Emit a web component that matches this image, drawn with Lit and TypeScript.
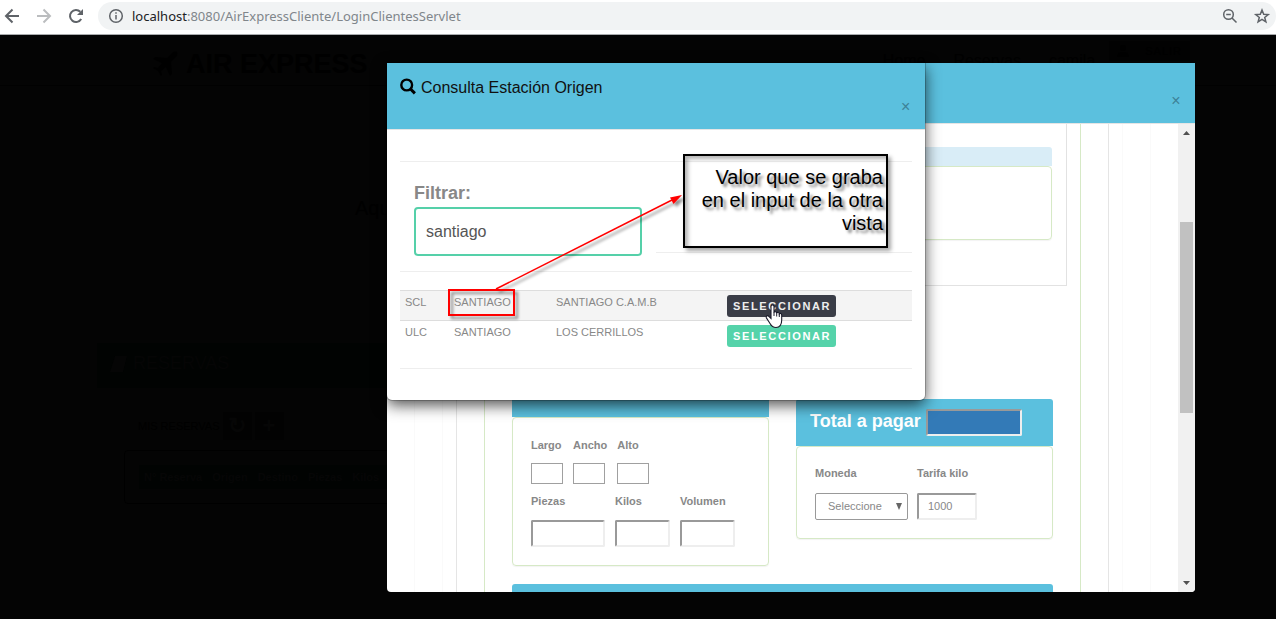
import { LitElement, html, css, svg } from "lit";
import { customElement, property, state } from "lit/decorators.js";

interface Station {
  code: string;
  city: string;
  name: string;
}

const STATIONS: Station[] = [
  { code: "SCL", city: "SANTIAGO", name: "SANTIAGO C.A.M.B" },
  { code: "ULC", city: "SANTIAGO", name: "LOS CERRILLOS" },
];

const base = css`
  * {
    box-sizing: border-box;
  }
  button,
  input,
  select {
    font-family: inherit;
    margin: 0;
  }
`;

@customElement("browser-bar")
class BrowserBar extends LitElement {
  static styles = [
    base,
    css`
      :host {
        display: flex;
        align-items: center;
        height: 35px;
        padding: 0 0 3px 2px;
        background: #fff;
        border-bottom: 1px solid #a9abad;
        font-family: "Noto Sans", "Open Sans", sans-serif;
      }
      .nav {
        display: flex;
        gap: 12px;
        margin-right: 12px;
      }
      button {
        display: flex;
        padding: 0;
        border: 0;
        background: none;
        color: #5f6368;
      }
      .nav button:disabled {
        color: #bbbdbf;
      }
      .address {
        flex: 1;
        display: flex;
        align-items: center;
        height: 28px;
        padding: 0 4px 0 8px;
        border-radius: 14px;
        background: #f1f3f4;
      }
      .url {
        flex: 1;
        margin-left: 6px;
        font-size: 13px;
        line-height: 20px;
        color: #80868b;
      }
      .url b {
        font-weight: 400;
        color: #202124;
      }
      .tools {
        display: flex;
        gap: 12px;
      }
    `,
  ];

  render() {
    return html`
      <div class="nav">
        <button aria-label="Atrás">
          <svg width="20" height="20" viewBox="0 0 20 20" fill="none" stroke="currentColor" stroke-width="2">
            <path d="M17 10H4M10.5 3.5L4 10l6.500 6.500" />
          </svg>
        </button>
        <button aria-label="Adelante" disabled>
          <svg width="20" height="20" viewBox="0 0 20 20" fill="none" stroke="currentColor" stroke-width="2">
            <path d="M3 10h13M9.500 3.500L16 10l-6.500 6.500" />
          </svg>
        </button>
        <button aria-label="Recargar">
          <svg width="20" height="20" viewBox="0 0 20 20">
            <path d="M15.200 13A6 6 0 1 1 14.300 5.800" fill="none" stroke="currentColor" stroke-width="2" />
            <path d="M17 3v6h-6z" fill="currentColor" />
          </svg>
        </button>
      </div>
      <div class="address">
        <svg width="20" height="20" viewBox="0 0 20 20" fill="none" stroke="#5f6368" stroke-width="1.500">
          <circle cx="10" cy="10" r="6.300" />
          <path d="M10 9v4.500M10 6.200v1.600" />
        </svg>
        <span class="url"><b>localhost</b>:8080/AirExpressCliente/LoginClientesServlet</span>
        <div class="tools">
          <button aria-label="Zoom">
            <svg width="20" height="20" viewBox="0 0 20 20" fill="none" stroke="currentColor" stroke-width="1.500">
              <circle cx="8.500" cy="8.500" r="4.800" />
              <path d="M12 12l4.500 4.500M6.200 8.500h4.600" />
            </svg>
          </button>
          <button aria-label="Marcador">
            <svg width="20" height="20" viewBox="0 0 20 20" fill="none" stroke="currentColor" stroke-width="1.500">
              <path d="M10 4l1.700 4.200 4.500.3-3.500 2.900 1.200 4.400L10 13.400l-3.900 2.400 1.200-4.400-3.500-2.900 4.500-.3z" />
            </svg>
          </button>
        </div>
      </div>
    `;
  }
}

/* The page behind the dialogs, dimmed almost to black by the backdrop. */
@customElement("dimmed-page")
class DimmedPage extends LitElement {
  static styles = [
    base,
    css`
      :host {
        display: block;
        color: #000;
        background: #040404;
        font-family: "Liberation Sans", Arial, sans-serif;
      }
      header {
        display: flex;
        align-items: flex-start;
        height: 51px;
        padding: 6px 86px 0 152px;
        border-bottom: 1px solid #010101;
      }
      .brand {
        display: flex;
        align-items: center;
        gap: 8px;
        margin: 8px auto 0 0;
        font-size: 27px;
        line-height: 30px;
        font-weight: 700;
      }
      nav {
        display: flex;
        gap: 28px;
        padding-top: 10px;
        font-size: 16px;
        line-height: 20px;
      }
      a {
        color: inherit;
        text-decoration: none;
      }
      button {
        border: 0;
        background: #020202;
        color: #000;
      }
      .exit {
        display: flex;
        align-items: center;
        gap: 16px;
        height: 20px;
        margin-left: 14px;
        padding: 0 8px;
        font-size: 11px;
        letter-spacing: 1px;
      }
      h1 {
        margin: 110px 0 0 355px;
        font-size: 20px;
        line-height: 24px;
        font-weight: 400;
      }
      .panel {
        margin: 123px 97px 0;
      }
      h2 {
        display: flex;
        align-items: center;
        gap: 6px;
        margin: 0;
        height: 45px;
        padding: 0 13px 4px;
        background: #010302;
        color: #050505;
        font-size: 18px;
        font-weight: 400;
      }
      .row {
        display: flex;
        align-items: center;
        gap: 3px;
        padding: 24px 0 0 41px;
        font-size: 11px;
      }
      .row button {
        width: 29px;
        height: 28px;
        padding: 0;
        font-size: 22px;
        line-height: 28px;
        font-weight: 700;
        color: #060606;
      }
      .box {
        margin: 10px 0 0 27px;
        padding: 14px;
        border: 1px solid #000;
        border-radius: 4px;
      }
      table {
        border-collapse: collapse;
        width: 100%;
        background: #010302;
        color: #060606;
        font-size: 11px;
      }
      th {
        height: 24px;
        padding: 0 5px;
        text-align: left;
        white-space: nowrap;
      }
      th:last-child {
        width: 100%;
      }
    `,
  ];

  render() {
    return html`
      <header>
        <div class="brand">
          <svg width="26" height="26" viewBox="0 0 26 26">
            <path d="M25 1c-2-1-4 0-6 2l-4 4L3 6 1 8l9 4-4 5-4-1-1 1 5 3 3 5 1-1-1-4 5-4 4 9 2-2-1-12 4-4c2-2 3-4 2-6z" />
          </svg>
          AIR EXPRESS
        </div>
        <nav>
          <a href="#">Home</a><a href="#">Reservas</a><a href="#">camila</a>
        </nav>
        <button class="exit">
          <svg width="12" height="12" viewBox="0 0 12 12"><circle cx="6" cy="3" r="3" /><path d="M0 12c0-4 3-5 6-5s6 1 6 5z" /></svg>
          SALIR
        </button>
      </header>
      <h1>Aquí</h1>
      <section class="panel">
        <h2>
          <svg width="17" height="16" viewBox="0 0 17 16" fill="currentColor"><path d="M5 0h12l-4 16H0z" /></svg>
          RESERVAS
        </h2>
        <div class="row">
          MIS RESERVAS
          <button aria-label="Actualizar">↻</button>
          <button aria-label="Agregar">+</button>
        </div>
        <div class="box">
          <table>
            <thead>
              <tr>
                <th>N° Reserva</th>
                <th>Origen</th>
                <th>Destino</th>
                <th>Piezas</th>
                <th>Kilos</th>
                <th></th>
              </tr>
            </thead>
          </table>
        </div>
      </section>
    `;
  }
}

@customElement("booking-dialog")
class BookingDialog extends LitElement {
  static styles = [
    base,
    css`
      :host {
        display: flex;
        flex-direction: column;
        overflow: hidden;
        border-radius: 0 0 4px 4px;
        background: #fff;
        color: #888;
        font-family: "Liberation Sans", Arial, sans-serif;
        font-size: 11px;
        line-height: 16px;
      }
      header {
        flex: none;
        display: flex;
        justify-content: flex-end;
        align-items: flex-end;
        height: 61px;
        padding: 0 13px;
        padding-bottom: 13px;
        background: #5bc0de;
        border-bottom: 1px solid #e5e5e5;
      }
      .close {
        width: 12px;
        height: 18px;
        padding: 0;
        border: 0;
        background: none;
        color: #3e8297;
        font-size: 16px;
        line-height: 18px;
      }
      .viewport {
        flex: 1;
        min-height: 0;
        display: flex;
      }
      .content {
        flex: 1;
        min-width: 0;
        overflow: hidden;
        display: flex;
        padding: 0 27px;
      }
      .frame {
        flex: 1;
        display: flex;
        border: solid #fafafa;
        border-width: 0 1px;
        padding: 0 27px;
      }
      .frame .frame {
        padding: 0 13px;
      }
      .frame .frame .frame {
        border-color: #e5e5e5;
        padding: 0 27px;
      }
      .form {
        flex: 1;
        min-width: 0;
        border: solid #d6e9c6;
        border-width: 0 1px;
        padding: 0 13px;
      }
      .box {
        padding: 23px 14px 45px 13px;
        border: solid #e2e2e2;
        border-width: 0 1px 1px;
      }
      .head {
        height: 19px;
        border-radius: 3px 3px 0 0;
        background: #5bc0de;
      }
      .head.info {
        background: #d9edf7;
      }
      .panel {
        border: 1px solid #d6e9c6;
        border-radius: 4px;
        padding: 18px;
        box-shadow: 0 1px 1px rgba(0, 0, 0, 0.05);
      }
      .panel.empty {
        height: 74px;
      }
      .columns {
        display: grid;
        grid-template-columns: 1fr 1fr;
        gap: 27px;
        align-items: start;
        margin: 84px 14px 18px;
      }
      .head.title {
        display: flex;
        align-items: center;
        gap: 5px;
        height: 47px;
        padding: 0 14px;
        color: #fff;
        font-size: 18px;
        font-weight: 700;
      }
      .head.title label {
        padding-bottom: 4px;
      }
      .payment {
        margin-top: 29px;
      }
      .last {
        margin: 0 14px;
      }
      .measures {
        padding-top: 19px;
      }
      .fields {
        display: flex;
        gap: 10px;
      }
      .fields label {
        display: flex;
        flex-direction: column;
        gap: 10px;
        font-weight: 700;
      }
      .fields + .fields {
        margin-top: 9px;
      }
      .fields + .fields label {
        gap: 11px;
      }
      .payment .fields {
        gap: 9px;
      }
      .payment .fields label {
        gap: 12px;
      }
      input {
        width: 55px;
        height: 27px;
        padding: 0 9px 1px;
        border: 2px solid;
        border-color: #999 #eee #eee #999;
        border-radius: 2px;
        background: #fff;
        color: #888;
        font-size: 11px;
      }
      input.small {
        width: 32px;
        height: 21px;
        border: 1px solid #a0a0a0;
        border-radius: 0;
      }
      input.pieces {
        width: 74px;
      }
      input.rate {
        width: 60px;
      }
      input.total {
        width: 96px;
        background: #337ab7;
        color: #fff;
      }
      .select {
        display: grid;
        align-items: center;
      }
      .select select {
        grid-area: 1 / 1;
        appearance: none;
        width: 93px;
        height: 27px;
        padding: 0 12px 1px;
        border: 1px solid #999;
        border-radius: 2px;
        background: #fff;
        color: #888;
        font-size: 11px;
      }
      .select svg {
        grid-area: 1 / 1;
        justify-self: end;
        margin-right: 6px;
        pointer-events: none;
      }
      .scroll {
        flex: none;
        display: flex;
        flex-direction: column;
        align-items: center;
        width: 17px;
        padding: 7px 0;
        background: #f1f1f1;
      }
      .thumb {
        width: 13px;
        flex: 190;
        background: #c1c1c1;
      }
      .before {
        flex: 86;
      }
      .after {
        flex: 167;
      }
    `,
  ];

  render() {
    return html`
      <header><button class="close" aria-label="Cerrar">×</button></header>
      <div class="viewport">
        <div class="content">
          <div class="frame"><div class="frame"><div class="frame">
            <div class="form">
              <div class="box">
                <div class="head info"></div>
                <div class="panel empty"></div>
              </div>
              <div class="columns">
                <section>
                  <div class="head title"></div>
                  <div class="panel measures">
                    <div class="fields">
                      <label>Largo<input class="small" /></label>
                      <label>Ancho<input class="small" /></label>
                      <label>Alto<input class="small" /></label>
                    </div>
                    <div class="fields">
                      <label>Piezas<input class="pieces" /></label>
                      <label>Kilos<input /></label>
                      <label>Volumen<input /></label>
                    </div>
                  </div>
                </section>
                <section class="payment">
                  <div class="head title">
                    <label for="total">Total a pagar</label>
                    <input id="total" class="total" />
                  </div>
                  <div class="panel">
                    <div class="fields">
                      <label>Moneda
                        <span class="select">
                          <select><option>Seleccione</option></select>
                          <svg width="6" height="7" viewBox="0 0 6 7"><path d="M0 0h6L3 7z" fill="#666" /></svg>
                        </span>
                      </label>
                      <label>Tarifa kilo<input class="rate" .value=${"1000"} /></label>
                    </div>
                  </div>
                </section>
              </div>
              <div class="last"><div class="head"></div></div>
            </div>
          </div></div></div>
        </div>
        <div class="scroll">
          <svg width="7" height="4" viewBox="0 0 7 4"><path d="M0 4h7L3.500 0z" fill="#505050" /></svg>
          <div class="before"></div>
          <div class="thumb"></div>
          <div class="after"></div>
          <svg width="7" height="4" viewBox="0 0 7 4"><path d="M0 0h7L3.500 4z" fill="#505050" /></svg>
        </div>
      </div>
    `;
  }
}

@customElement("station-dialog")
class StationDialog extends LitElement {
  @property({ attribute: false }) stations: Station[] = [];
  @state() private filter = "santiago";

  static styles = [
    base,
    css`
      :host {
        display: block;
        overflow: hidden;
        border-radius: 0 0 5px 5px;
        background: #fff;
        box-shadow: 0 0 0 1px rgba(0, 0, 0, 0.2), 0 5px 15px rgba(0, 0, 0, 0.7);
        color: #888;
        font-family: "Liberation Sans", Arial, sans-serif;
        font-size: 11px;
        line-height: 16px;
      }
      header {
        display: flex;
        align-items: flex-start;
        justify-content: space-between;
        height: 67px;
        padding: 15px 13px 0;
        background: #5bc0de;
        border-bottom: 1px solid #e5e5e5;
      }
      h2 {
        display: flex;
        align-items: center;
        gap: 5px;
        margin: 0;
        color: #111;
        font-size: 16px;
        line-height: 20px;
        font-weight: 400;
      }
      .close {
        width: 12px;
        height: 18px;
        margin-top: 20px;
        padding: 0;
        border: 0;
        background: none;
        color: #3e8297;
        font-size: 16px;
        line-height: 18px;
      }
      .body {
        padding: 31px 13px;
      }
      hr {
        margin: 0;
        border: 0;
        border-top: 1px solid #eee;
      }
      .search {
        display: grid;
        grid-template-columns: 1fr 1fr;
        align-items: end;
        padding: 20px 0 15px;
      }
      .search hr {
        margin-bottom: 3px;
      }
      .filter {
        padding: 0 14px;
      }
      .filter label {
        display: block;
        padding-bottom: 3px;
        font-size: 18px;
        line-height: 22px;
        font-weight: 700;
      }
      .filter input {
        display: block;
        width: 100%;
        height: 49px;
        padding: 0 10px;
        border: 2px solid #55d0a9;
        border-radius: 4px;
        outline: 0;
        background: #fff;
        color: #555;
        font-size: 16px;
      }
      table {
        width: 100%;
        margin: 18px 0 17px;
        table-layout: fixed;
        border-collapse: collapse;
      }
      .code {
        width: 49px;
      }
      .city {
        width: 102px;
      }
      .name {
        width: 171px;
      }
      td {
        height: 30px;
        padding: 3px 5px;
        border-top: 1px solid #ddd;
        vertical-align: top;
      }
      td:last-child {
        padding-top: 4px;
      }
      tbody tr:first-child {
        background: #f4f4f4;
      }
      td button {
        display: block;
        height: 22px;
        padding: 0 5px 0 6px;
        border: 0;
        border-radius: 3px;
        background: #55d3aa;
        color: #fff;
        font-size: 11px;
        line-height: 22px;
        font-weight: 700;
        letter-spacing: 0.15em;
      }
      tr:first-child button {
        background: #3a3d47;
        color: #eee;
      }
    `,
  ];

  render() {
    const rows = this.stations.filter((s) => s.city.toLowerCase().includes(this.filter.toLowerCase()));
    return html`
      <header>
        <h2>
          <svg width="16" height="20" viewBox="0 0 16 20" fill="none" stroke="#000">
            <circle cx="6.700" cy="7" r="5.400" stroke-width="2.400" />
            <path d="M10.500 11l4.400 4.400" stroke-width="3" />
          </svg>
          Consulta Estación Origen
        </h2>
        <button class="close" aria-label="Cerrar">×</button>
      </header>
      <div class="body">
        <hr />
        <div class="search">
          <div class="filter">
            <label for="filter">Filtrar:</label>
            <input
              id="filter"
              .value=${this.filter}
              @input=${(e: Event) => (this.filter = (e.target as HTMLInputElement).value)}
            />
          </div>
          <hr />
        </div>
        <hr />
        <table>
          <colgroup><col class="code" /><col class="city" /><col class="name" /><col /></colgroup>
          <tbody>
            ${rows.map(
              (s) => html`<tr>
                <td>${s.code}</td>
                <td>${s.city}</td>
                <td>${s.name}</td>
                <td><button>SELECCIONAR</button></td>
              </tr>`
            )}
          </tbody>
        </table>
        <hr />
      </div>
    `;
  }
}

@customElement("app-root")
class AppRoot extends LitElement {
  static styles = [
    base,
    css`
      :host {
        display: flex;
        flex-direction: column;
        height: 100vh;
        overflow: hidden;
        font-family: "Liberation Sans", Arial, sans-serif;
      }
      main {
        flex: 1;
        min-height: 0;
        display: grid;
        position: relative;
        overflow: hidden;
      }
      dimmed-page,
      .dialogs {
        grid-area: 1 / 1;
        min-width: 0;
        min-height: 0;
      }
      .dialogs {
        display: grid;
        grid-template-columns: 2fr 1fr;
        align-items: start;
        padding: 28px 81px 27px 387px;
        z-index: 1;
      }
      booking-dialog {
        grid-area: 1 / 1 / 2 / 3;
        height: 100%;
        min-height: 0;
      }
      station-dialog {
        grid-area: 1 / 1;
        margin-right: 1px;
        z-index: 1;
      }
      /* Annotations drawn freely over the dialogs */
      .marks {
        position: absolute;
        z-index: 2;
        left: 0;
        top: 0;
        pointer-events: none;
      }
      .note {
        position: absolute;
        z-index: 2;
        left: 683px;
        top: 119px;
        width: 205px;
        height: 94px;
        margin: 0;
        padding: 10px 3px;
        border: 2px solid #000;
        color: #000;
        font-size: 20px;
        line-height: 23px;
        text-align: right;
        text-shadow: 3px 3px 3px rgba(0, 0, 0, 0.5);
        box-shadow: 3px 3px 4px rgba(0, 0, 0, 0.35), inset 3px 3px 4px rgba(0, 0, 0, 0.3);
      }
    `,
  ];

  private marks() {
    return svg`
      <defs>
        <filter id="drop" x="-10%" y="-10%" width="130%" height="130%">
          <feDropShadow dx="3" dy="3" stdDeviation="1.500" flood-opacity="0.45" />
        </filter>
      </defs>
      <g filter="url(#drop)">
        <rect x="449" y="255" width="65" height="25" fill="none" stroke="#f00" stroke-width="2" />
        <path d="M496 254L672 165" stroke="#f00" stroke-width="1.500" />
        <path d="M682 160l-8.500 9-3.500-6.500z" fill="#f00" />
      </g>
      <path
        d="M771 271.500c0-2 3-2 3 0v6c.3-1.300 2.600-1.100 2.700.6.500-1.100 2.500-.8 2.600.8.700-.9 2.400-.5 2.400 1.200v5c0 5-2 7.400-5.700 7.400-3.400 0-4.600-1.400-6-4l-3.600-5.600c-1-1.700 1-3 2.400-1.600l2.200 2.200z"
        fill="#fff" stroke="#1a1a2a" stroke-width="1.100" />
      <path d="M774 277v4M776.700 278v3.500M779.300 279v3" stroke="#1a1a2a" stroke-width="1" />
    `;
  }

  render() {
    return html`
      <browser-bar></browser-bar>
      <main>
        <dimmed-page></dimmed-page>
        <div class="dialogs">
          <booking-dialog></booking-dialog>
          <station-dialog .stations=${STATIONS}></station-dialog>
        </div>
        <svg class="marks" width="960" height="400" viewBox="0 0 960 400">${this.marks()}</svg>
        <p class="note">Valor que se graba en el input de la otra vista</p>
      </main>
    `;
  }
}
